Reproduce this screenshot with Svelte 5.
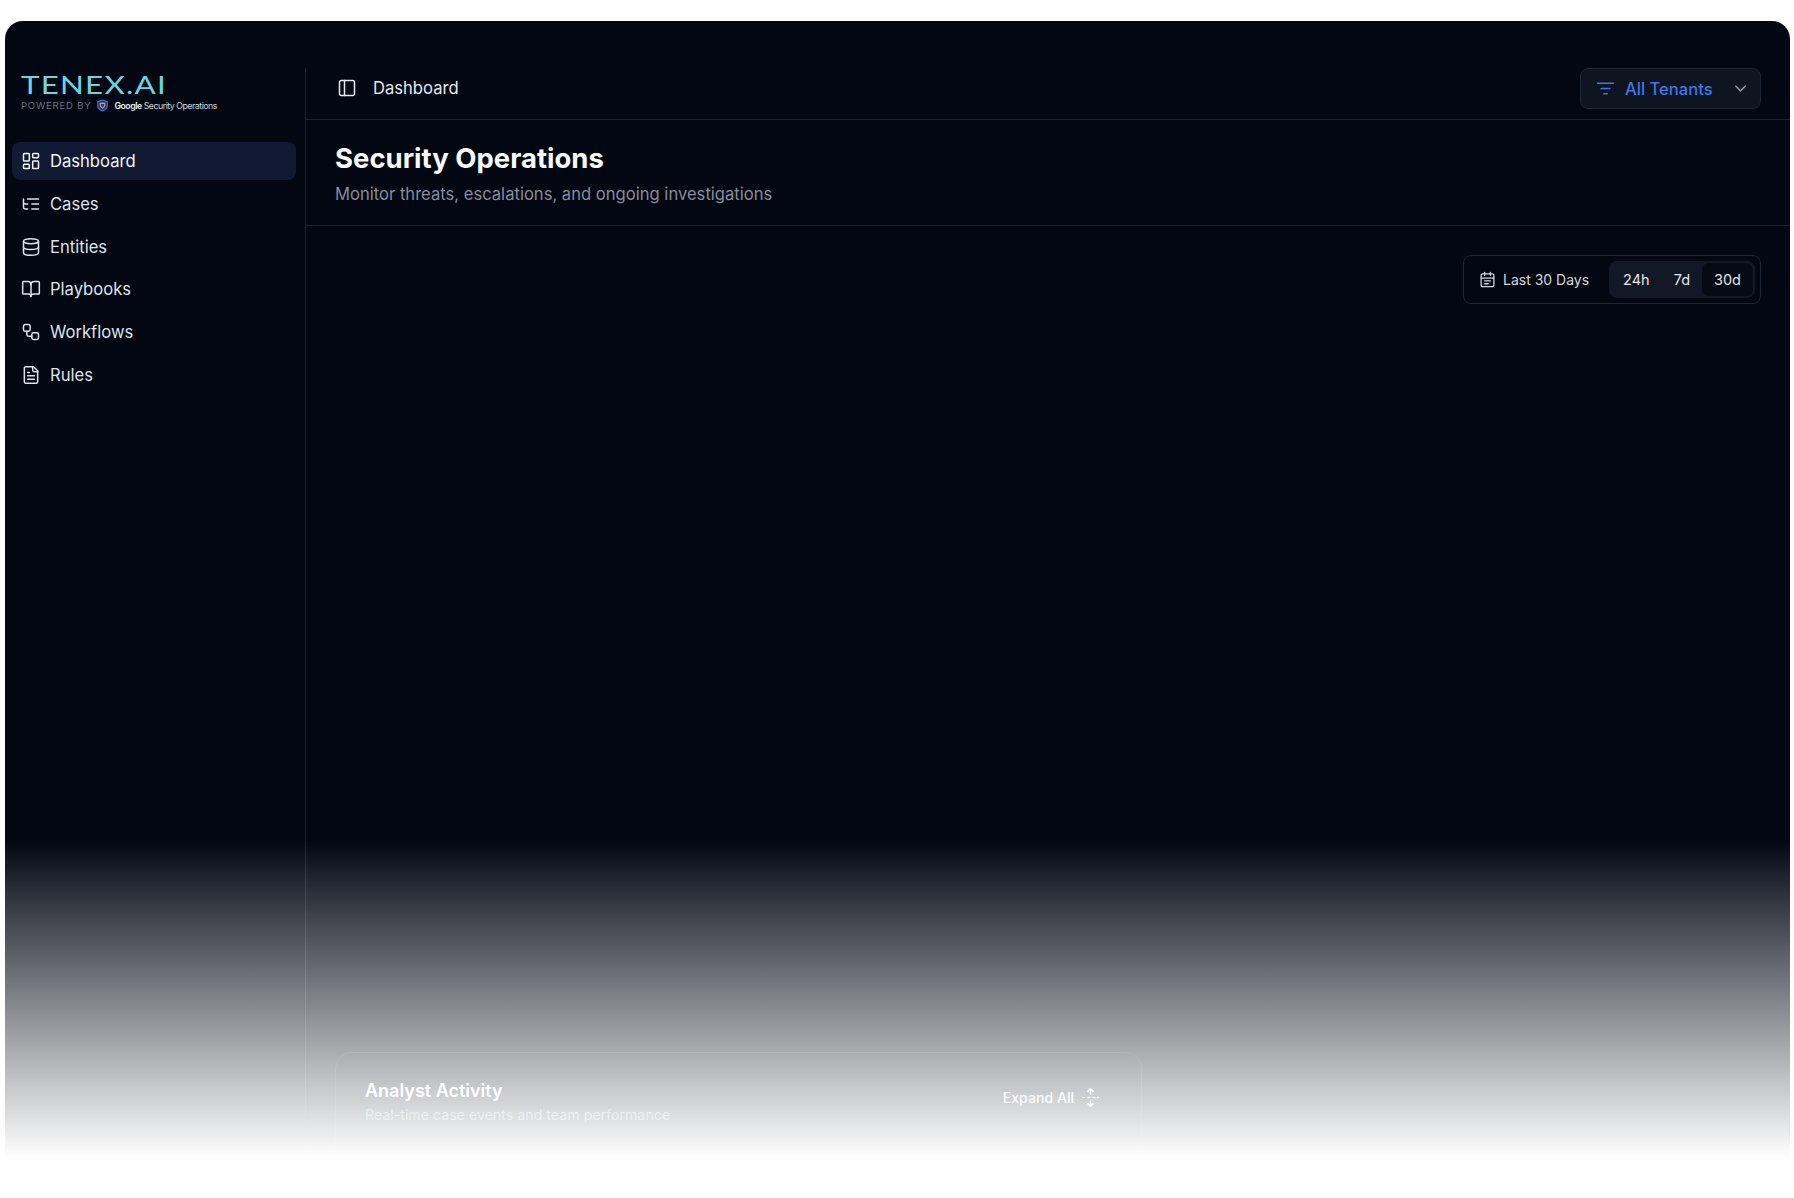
<script>
  const navItems = [
    { label: 'Dashboard', icon: 'dashboard', active: true },
    { label: 'Cases', icon: 'cases' },
    { label: 'Entities', icon: 'entities' },
    { label: 'Playbooks', icon: 'playbooks' },
    { label: 'Workflows', icon: 'workflows' },
    { label: 'Rules', icon: 'rules' }
  ];
  const ranges = ['24h', '7d', '30d'];
  let range = $state('30d');
</script>

<div class="frame">
  <div class="shell">
    <aside class="sidebar">
      <div class="brand">
        <div class="logo">TENEX.AI</div>
        <div class="powered">
          <span class="by">POWERED BY</span>
          <svg class="shield" viewBox="0 0 24 24" width="13" height="13" fill="none">
            <path d="M12 2 3 5v7c0 5 4 8.500 9 10 5-1.500 9-5 9-10V5z" fill="#1f3a8a" stroke="#3b6fe0" stroke-width="2"/>
            <path d="M8 8h8v4c0 2-2 3.500-4 4.500-2-1-4-2.500-4-4.500z" stroke="#e8a33d" stroke-width="2"/>
          </svg>
          <span class="google"><b>Google</b> Security Operations</span>
        </div>
      </div>
      <nav class="nav">
        {#each navItems as item}
          <a class="nav-item" class:active={item.active} href="#{item.icon}">
            <svg viewBox="0 0 24 24" width="20" height="20" fill="none" stroke="currentColor" stroke-width="1.800" stroke-linecap="round" stroke-linejoin="round">
              {#if item.icon === 'dashboard'}
                <rect x="3" y="3" width="7" height="9" rx="1"/><rect x="14" y="3" width="7" height="5" rx="1"/><rect x="14" y="12" width="7" height="9" rx="1"/><rect x="3" y="16" width="7" height="5" rx="1"/>
              {:else if item.icon === 'cases'}
                <path d="M21 12h-8M21 6H8M21 18h-8M3 6v4c0 1.100.900 2 2 2h3M3 10v6c0 1.100.900 2 2 2h3"/>
              {:else if item.icon === 'entities'}
                <ellipse cx="12" cy="5" rx="9" ry="3"/><path d="M3 5v14c0 1.700 4 3 9 3s9-1.300 9-3V5"/><path d="M3 12c0 1.700 4 3 9 3s9-1.300 9-3"/>
              {:else if item.icon === 'playbooks'}
                <path d="M12 7v14"/><path d="M3 18a1 1 0 0 1-1-1V4a1 1 0 0 1 1-1h5a4 4 0 0 1 4 4 4 4 0 0 1 4-4h5a1 1 0 0 1 1 1v13a1 1 0 0 1-1 1h-6a3 3 0 0 0-3 3 3 3 0 0 0-3-3z"/>
              {:else if item.icon === 'workflows'}
                <rect x="3" y="3" width="8" height="8" rx="2"/><path d="M7 11v4a2 2 0 0 0 2 2h4"/><rect x="13" y="13" width="8" height="8" rx="2"/>
              {:else}
                <path d="M15 2H6a2 2 0 0 0-2 2v16a2 2 0 0 0 2 2h12a2 2 0 0 0 2-2V7z"/><path d="M14 2v4a2 2 0 0 0 2 2h4"/><path d="M10 9H8M16 13H8M16 17H8"/>
              {/if}
            </svg>
            <span>{item.label}</span>
          </a>
        {/each}
      </nav>
    </aside>

    <main class="main">
      <header class="topbar">
        <div class="crumb">
          <svg viewBox="0 0 24 24" width="20" height="20" fill="none" stroke="currentColor" stroke-width="1.800" stroke-linecap="round" stroke-linejoin="round">
            <rect x="3" y="3" width="18" height="18" rx="2"/><path d="M9 3v18"/>
          </svg>
          <span>Dashboard</span>
        </div>
        <button class="tenants">
          <svg viewBox="0 0 24 24" width="21" height="21" fill="none" stroke="currentColor" stroke-width="1.800" stroke-linecap="round">
            <path d="M3 6h18M7 12h10M10 18h4"/>
          </svg>
          <span>All Tenants</span>
          <svg class="chev" viewBox="0 0 24 24" width="19" height="19" fill="none" stroke="currentColor" stroke-width="1.800" stroke-linecap="round" stroke-linejoin="round">
            <path d="m6 9 6 6 6-6"/>
          </svg>
        </button>
      </header>

      <section class="page-head">
        <h1>Security Operations</h1>
        <p>Monitor threats, escalations, and ongoing investigations</p>
      </section>

      <div class="content">
        <div class="toolbar">
          <div class="range-box">
            <div class="range-label">
              <svg viewBox="0 0 24 24" width="17" height="17" fill="none" stroke="currentColor" stroke-width="1.800" stroke-linecap="round" stroke-linejoin="round">
                <path d="M8 2v4M16 2v4"/><rect x="3" y="4" width="18" height="18" rx="2"/><path d="M3 10h18M8 14h8M8 18h5"/>
              </svg>
              <span>Last 30 Days</span>
            </div>
            <div class="segments">
              {#each ranges as r}
                <button class="segment" class:on={range === r} onclick={() => (range = r)}>{r}</button>
              {/each}
            </div>
          </div>
        </div>

        <div class="card">
          <div class="card-head">
            <div>
              <h2>Analyst Activity</h2>
              <p>Real-time case events and team performance</p>
            </div>
            <button class="expand">
              <span>Expand All</span>
              <svg viewBox="0 0 24 24" width="21" height="21" fill="none" stroke="currentColor" stroke-width="1.800" stroke-linecap="round" stroke-linejoin="round">
                <path d="M12 8V2M9 5l3-3 3 3M12 16v6M9 19l3 3 3-3M3 12h2M9 12h2M15 12h2M20 12h1"/>
              </svg>
            </button>
          </div>
        </div>
      </div>
    </main>
  </div>
  <div class="fade"></div>
</div>

<style>
  :global(body) {
    background: #fff;
    font-family: Inter, "Liberation Sans", sans-serif;
  }

  .frame {
    position: relative;
    margin: 21px 4px 0 5px;
    height: 1137px;
    border-radius: 18px 18px 0 0;
    background: #020712;
    color: #e6e8ee;
    overflow: hidden;
  }

  .shell {
    display: flex;
    height: 100%;
    padding-top: 47px;
    box-sizing: border-box;
  }

  .sidebar {
    width: 301px;
    flex-shrink: 0;
    padding: 0 9px 0 7px;
    box-sizing: border-box;
    border-right: 1px solid #1b2130;
  }

  .brand {
    padding: 5px 9px 0;
    height: 74px;
    box-sizing: border-box;
  }

  .logo {
    font-family: Lato, sans-serif;
    font-size: 25px;
    line-height: 22px;
    letter-spacing: 1px;
    color: #6fd3e2;
    transform: scaleX(1.25);
    transform-origin: left;
  }

  .powered {
    display: flex;
    align-items: center;
    gap: 5px;
    margin-top: 4px;
    white-space: nowrap;
  }

  .by {
    font-size: 9.500px;
    letter-spacing: 0.800px;
    color: #6b7280;
  }

  .google {
    font-size: 8.800px;
    letter-spacing: -0.500px;
    color: #d1d5db;
  }

  .google b {
    font-weight: 600;
    color: #eceef2;
  }

  .nav {
    display: flex;
    flex-direction: column;
    gap: 4.800px;
  }

  .nav-item {
    display: flex;
    align-items: center;
    gap: 9px;
    height: 38px;
    padding: 0 9px;
    border-radius: 8px;
    font-size: 16.600px;
    color: #dfe2e8;
    text-decoration: none;
  }

  .nav-item.active {
    background: #101b33;
    color: #f1f3f7;
  }

  .main {
    flex: 1;
    min-width: 0;
    display: flex;
    flex-direction: column;
  }

  .topbar {
    display: flex;
    flex-shrink: 0;
    align-items: flex-start;
    justify-content: space-between;
    height: 52px;
    padding: 0 29px 0 31px;
    box-sizing: border-box;
    border-bottom: 1px solid #1b2130;
  }

  .crumb {
    display: flex;
    align-items: center;
    gap: 16px;
    height: 40px;
    font-size: 16.600px;
    color: #e8eaef;
  }

  .tenants {
    display: flex;
    align-items: center;
    width: 181px;
    height: 41px;
    padding: 0 10px 0 14px;
    box-sizing: border-box;
    background: #0e1420;
    border: 1px solid #1e2533;
    border-radius: 8px;
    color: #3f78e6;
    font: 500 16.600px Inter, sans-serif;
  }

  .tenants span {
    margin-left: 9px;
  }

  .tenants .chev {
    margin-left: auto;
    color: #8a909c;
  }

  .page-head {
    flex-shrink: 0;
    height: 106px;
    padding: 21px 29px 0;
    box-sizing: border-box;
    border-bottom: 1px solid #1b2130;
  }

  h1 {
    margin: 0;
    font-size: 27.500px;
    line-height: 34px;
    font-weight: 650;
    color: #fafbfc;
  }

  .page-head p {
    margin: 7px 0 0;
    font-size: 16.600px;
    line-height: 24px;
    color: #868d9c;
  }

  .content {
    display: flex;
    flex-direction: column;
    flex-shrink: 0;
    padding: 29px 29px 0;
  }

  .toolbar {
    display: flex;
    justify-content: flex-end;
    height: 49px;
  }

  .range-box {
    display: flex;
    align-items: center;
    justify-content: space-between;
    width: 298px;
    padding: 0 5px 0 15px;
    box-sizing: border-box;
    border: 1px solid #1e2533;
    border-radius: 8px;
  }

  .range-label {
    display: flex;
    align-items: center;
    gap: 7px;
    font-size: 14px;
    color: #d4d7de;
  }

  .segments {
    display: flex;
    align-items: center;
    height: 37px;
    padding: 0 2px;
    border-radius: 8px;
    background: #121826;
  }

  .segment {
    height: 33px;
    padding: 0 12px;
    border: 0;
    border-radius: 7px;
    background: none;
    color: #e4e6eb;
    font: 400 14.500px Inter, sans-serif;
  }

  .segment.on {
    background: #060a14;
  }

  .card {
    width: 807px;
    height: 300px;
    margin-top: 748px;
    box-sizing: border-box;
    border: 1px solid #1b2130;
    border-radius: 16px;
    padding: 26px 29px;
  }

  .card-head {
    display: flex;
    align-items: flex-start;
    justify-content: space-between;
    padding-right: 11px;
  }

  h2 {
    margin: 0;
    font-size: 18px;
    line-height: 24px;
    font-weight: 600;
    color: #fff;
  }

  .card-head p {
    margin: 2px 0 0;
    font-size: 14.200px;
    line-height: 20px;
    color: #8a909c;
  }

  .expand {
    display: flex;
    align-items: center;
    gap: 6px;
    margin-top: 8px;
    border: 0;
    background: none;
    padding: 0;
    color: #eceef2;
    font: 500 14.100px Inter, sans-serif;
  }

  .fade {
    position: absolute;
    left: 0;
    right: 0;
    bottom: 0;
    height: 318px;
    background: linear-gradient(to bottom, rgba(255, 255, 255, 0), #fff);
    pointer-events: none;
  }
</style>
